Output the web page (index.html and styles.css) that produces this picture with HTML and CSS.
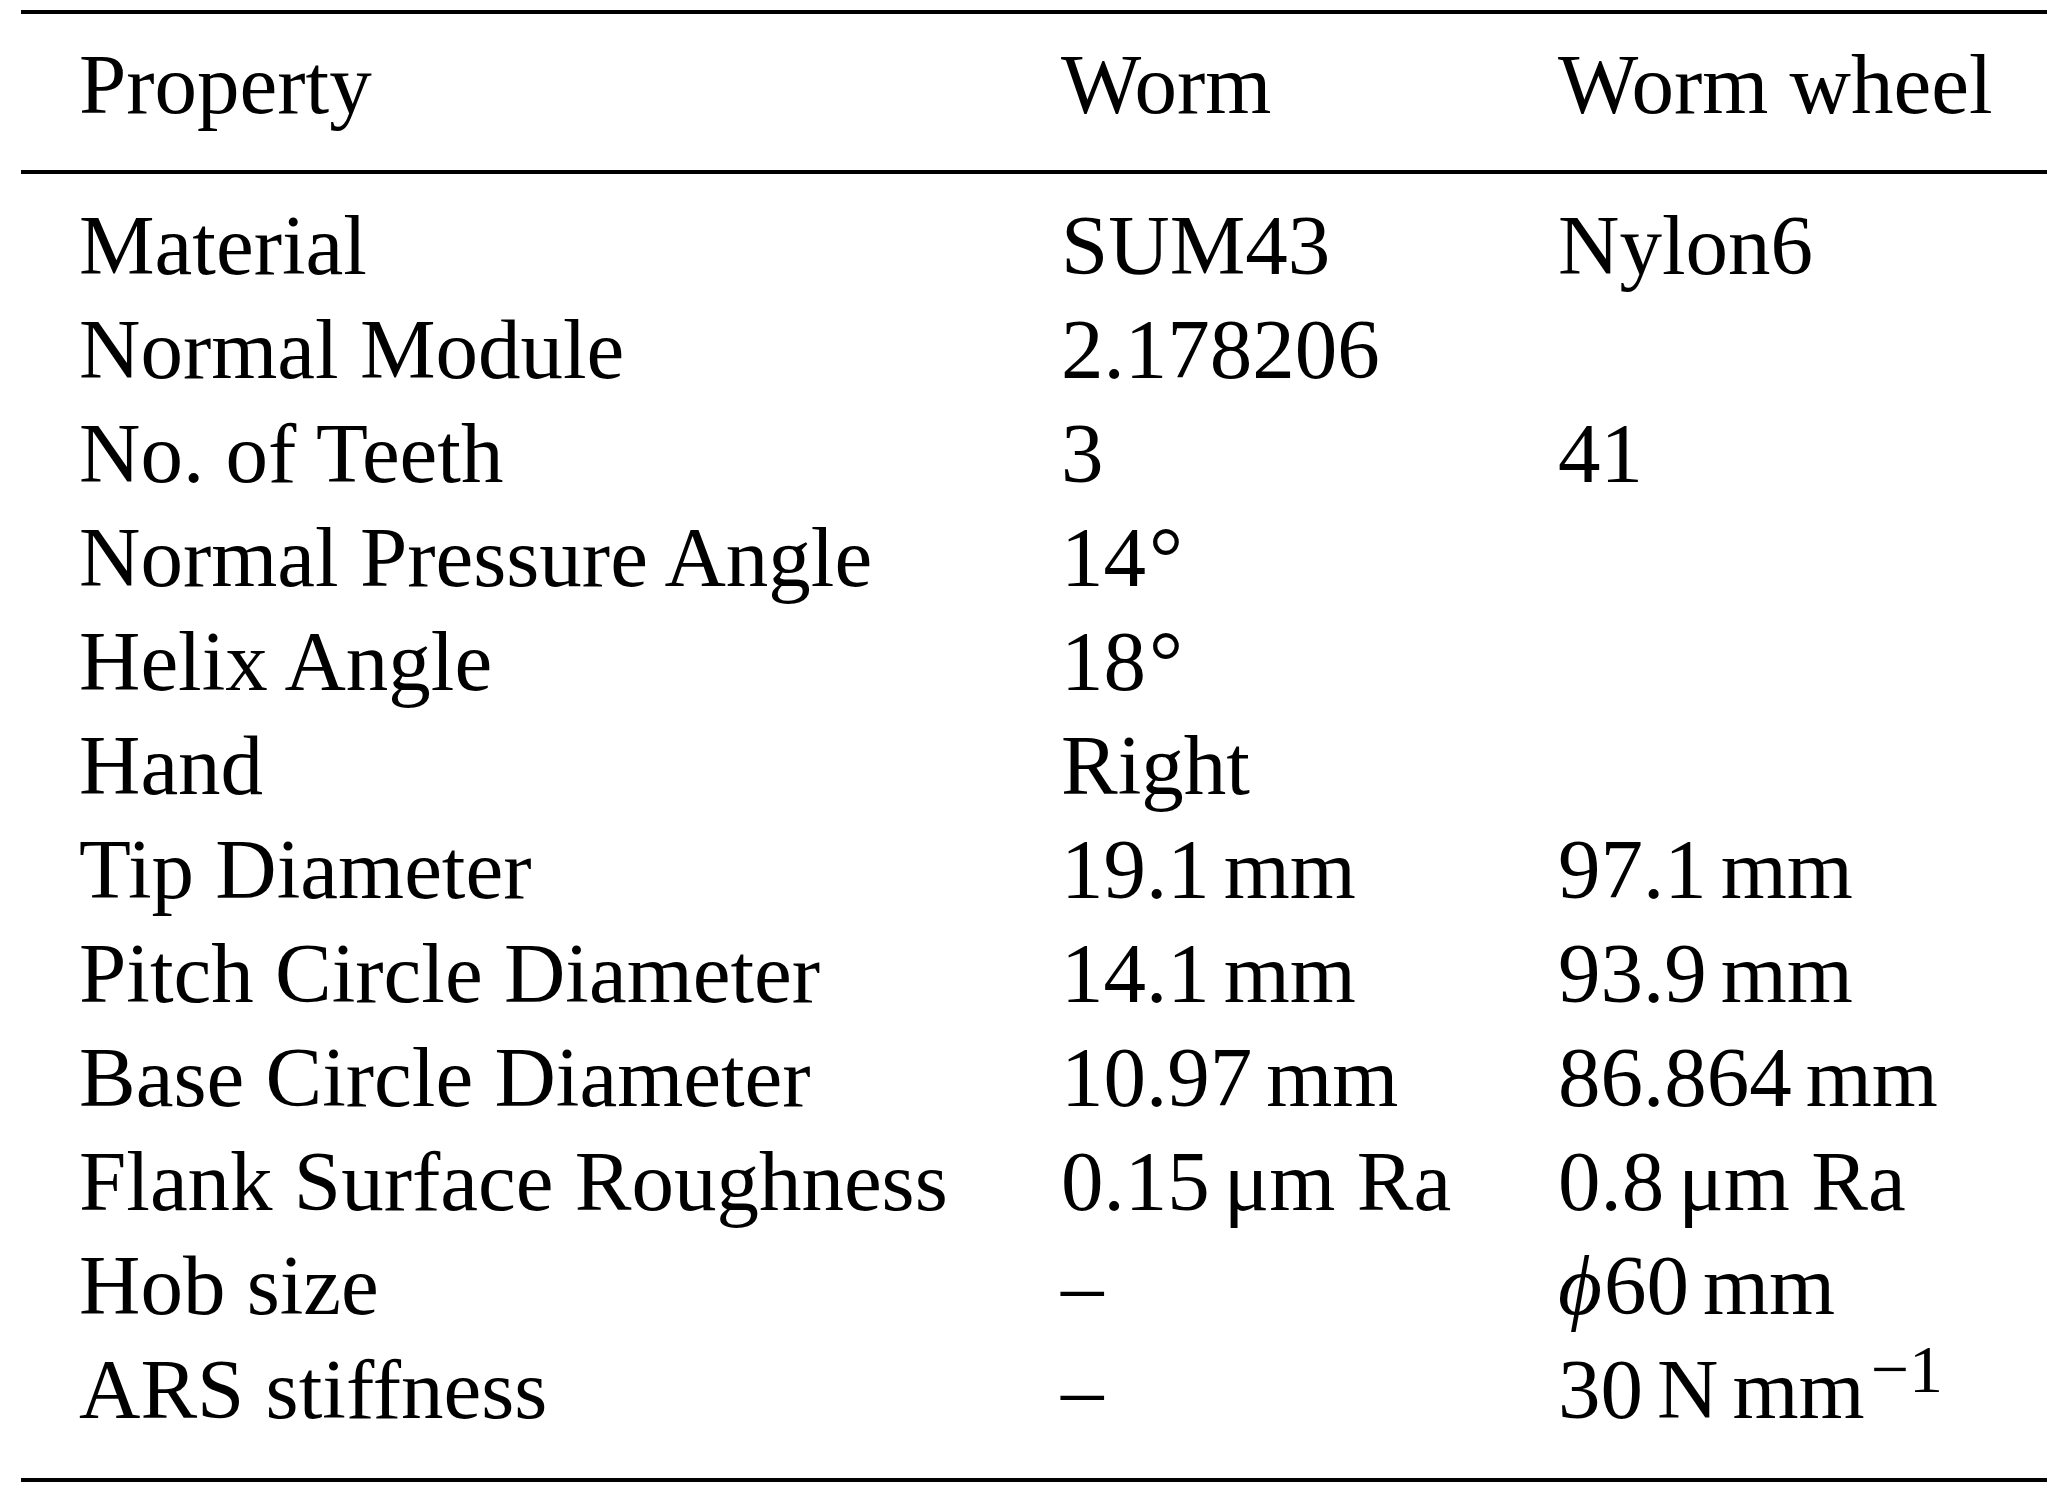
FILE: index.html
```html
<!DOCTYPE html>
<html lang="en">
<head>
<meta charset="utf-8">
<title>Worm gear properties</title>
<link rel="stylesheet" href="styles.css">
</head>
<body>
<div class="wrap">
  <table class="tbl">
    <thead>
      <tr><th>Property</th><th>Worm</th><th>Worm wheel</th></tr>
    </thead>
    <tbody>
      <tr><td>Material</td><td>SUM43</td><td>Nylon6</td></tr>
      <tr><td>Normal Module</td><td>2.178206</td><td></td></tr>
      <tr><td>No. of Teeth</td><td>3</td><td>41</td></tr>
      <tr><td>Normal Pressure Angle</td><td>14<span class="deg">°</span></td><td></td></tr>
      <tr><td>Helix Angle</td><td>18<span class="deg">°</span></td><td></td></tr>
      <tr><td>Hand</td><td>Right</td><td></td></tr>
      <tr><td>Tip Diameter</td><td>19.1<span class="ts">&thinsp;</span>mm</td><td>97.1<span class="ts">&thinsp;</span>mm</td></tr>
      <tr><td>Pitch Circle Diameter</td><td>14.1<span class="ts">&thinsp;</span>mm</td><td>93.9<span class="ts">&thinsp;</span>mm</td></tr>
      <tr><td>Base Circle Diameter</td><td>10.97<span class="ts">&thinsp;</span>mm</td><td>86.864<span class="ts">&thinsp;</span>mm</td></tr>
      <tr><td>Flank Surface Roughness</td><td>0.15<span class="ts">&thinsp;</span>μm Ra</td><td>0.8<span class="ts">&thinsp;</span>μm Ra</td></tr>
      <tr><td>Hob size</td><td>–</td><td><i class="phi">ϕ</i>60<span class="ts">&thinsp;</span>mm</td></tr>
      <tr><td>ARS stiffness</td><td>–</td><td>30<span class="ts">&thinsp;</span>N<span class="ts">&thinsp;</span>mm<span class="sup">−1</span></td></tr>
    </tbody>
  </table>
</div>
</body>
</html>
```
FILE: styles.css
```css
html, body {
  margin: 0;
  padding: 0;
  background: #ffffff;
}

body {
  font-family: "Liberation Serif", "Times New Roman", serif;
  color: #000000;
}

.wrap {
  padding: 10px 0 0 21px;
}

.tbl {
  width: 2026px;
  border-collapse: collapse;
  border-spacing: 0;
  font-size: 85px;
  line-height: 104px;
  border-top: 4px solid #000;
  border-bottom: 4px solid #000;
  table-layout: fixed;
}

.tbl th,
.tbl td {
  font-weight: normal;
  text-align: left;
  padding: 0;
  height: 104px;
  vertical-align: top;
  white-space: nowrap;
}

.tbl th:nth-child(1),
.tbl td:nth-child(1) {
  width: 982px;
  padding-left: 58px;
}

.tbl th:nth-child(2),
.tbl td:nth-child(2) {
  width: 497px;
}

.tbl thead th {
  padding-top: 18px;
  padding-bottom: 34px;
  border-bottom: 4px solid #000;
}

.tbl tbody tr:first-child td {
  padding-top: 19px;
}

.tbl tbody tr:last-child td {
  padding-bottom: 37px;
}

.ts {
  display: inline-block;
  width: 14px;
}

.deg {
  display: inline-block;
  margin-left: 3px;
}

.phi {
  font-family: "Liberation Serif", "DejaVu Serif", serif;
  font-style: italic;
  margin-right: 2px;
}

.sup {
  display: inline-block;
  font-size: 0.8em;
  vertical-align: 0.38em;
  line-height: 0;
  margin-left: 6px;
}
```
